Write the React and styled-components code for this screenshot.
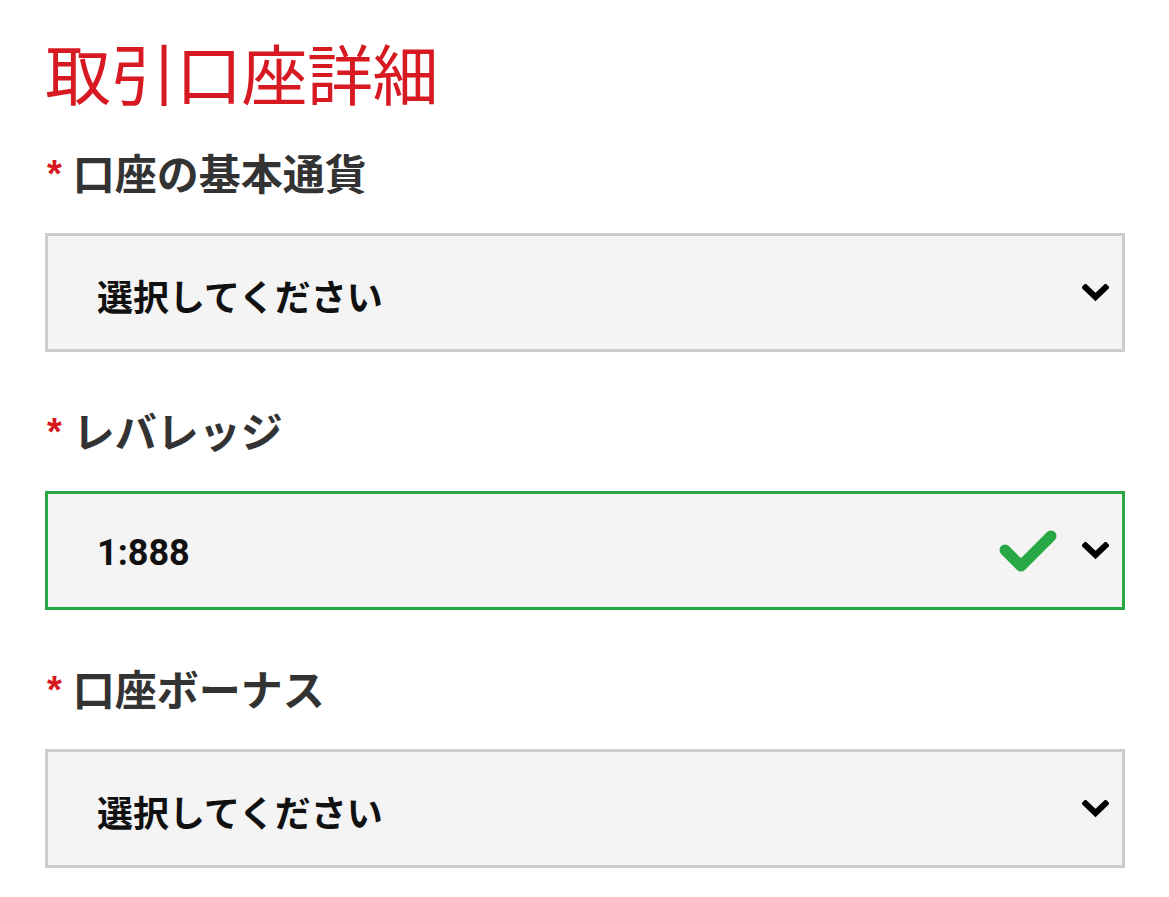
import React from "react";
import styled, { createGlobalStyle } from "styled-components";

const Global = createGlobalStyle`
  html, body { margin: 0; padding: 0; background: #fff; }
  body { font-family: Roboto, "Noto Sans CJK JP", sans-serif; }
`;

const Page = styled.div`
  display: flex;
  flex-direction: column;
  padding: 32px 44px 0 45px;
  width: 1080px;
`;

const Title = styled.h1`
  margin: 0 0 37px;
  font-family: "Noto Sans CJK JP", sans-serif;
  font-weight: 400;
  font-size: 66px;
  line-height: 78px;
  color: #d71921;
  letter-spacing: -0.5px;
`;

const Field = styled.div`
  display: flex;
  flex-direction: column;
  gap: 36px;
  margin-bottom: 53px;
`;

const Label = styled.label`
  display: flex;
  align-items: center;
  gap: 11px;
  font-family: "Noto Sans CJK JP", sans-serif;
  font-weight: 700;
  font-size: 42px;
  line-height: 50px;
  color: #333;
`;

const Star = styled.span`
  color: #d71921;
  font-family: "Liberation Sans", sans-serif;
  font-size: 38px;
  font-weight: 700;
  padding-left: 2px;
  position: relative;
  top: 2px;
`;

const Select = styled.div`
  box-sizing: border-box;
  height: 119px;
  display: flex;
  align-items: center;
  padding: 0 13px 0 49px;
  background: #f4f4f4;
  border: 3px solid ${(p) => (p.$valid ? "#28a745" : "#cccccc")};
`;

const Value = styled.span`
  flex: 1;
  font-family: Roboto, "Noto Sans CJK JP", sans-serif;
  font-weight: 700;
  font-size: 36px;
  color: #111;
  position: relative;
  top: 2px;
`;

const Icons = styled.div`
  display: flex;
  align-items: center;
  gap: 25px;
`;

const Chevron = () => (
  <svg width="27" height="18" viewBox="0 0 27 18">
    <polyline
      points="3.5,3.5 13.5,13 23.5,3.5"
      fill="none"
      stroke="#000"
      strokeWidth="6"
      strokeLinecap="square"
    />
  </svg>
);

const Check = () => (
  <svg width="58" height="46" viewBox="0 0 58 46">
    <polyline
      points="6,22 22,38 52,8"
      fill="none"
      stroke="#28a745"
      strokeWidth="11"
      strokeLinecap="round"
      strokeLinejoin="round"
    />
  </svg>
);

const fields = [
  { label: "口座の基本通貨", value: "選択してください" },
  { label: "レバレッジ", value: "1:888", valid: true },
  { label: "口座ボーナス", value: "選択してください" },
];

export default function App() {
  return (
    <>
      <Global />
      <Page>
        <Title>取引口座詳細</Title>
        {fields.map((f) => (
          <Field key={f.label}>
            <Label>
              <Star>*</Star>
              {f.label}
            </Label>
            <Select $valid={f.valid}>
              <Value>{f.value}</Value>
              <Icons>
                {f.valid && <Check />}
                <Chevron />
              </Icons>
            </Select>
          </Field>
        ))}
      </Page>
    </>
  );
}
